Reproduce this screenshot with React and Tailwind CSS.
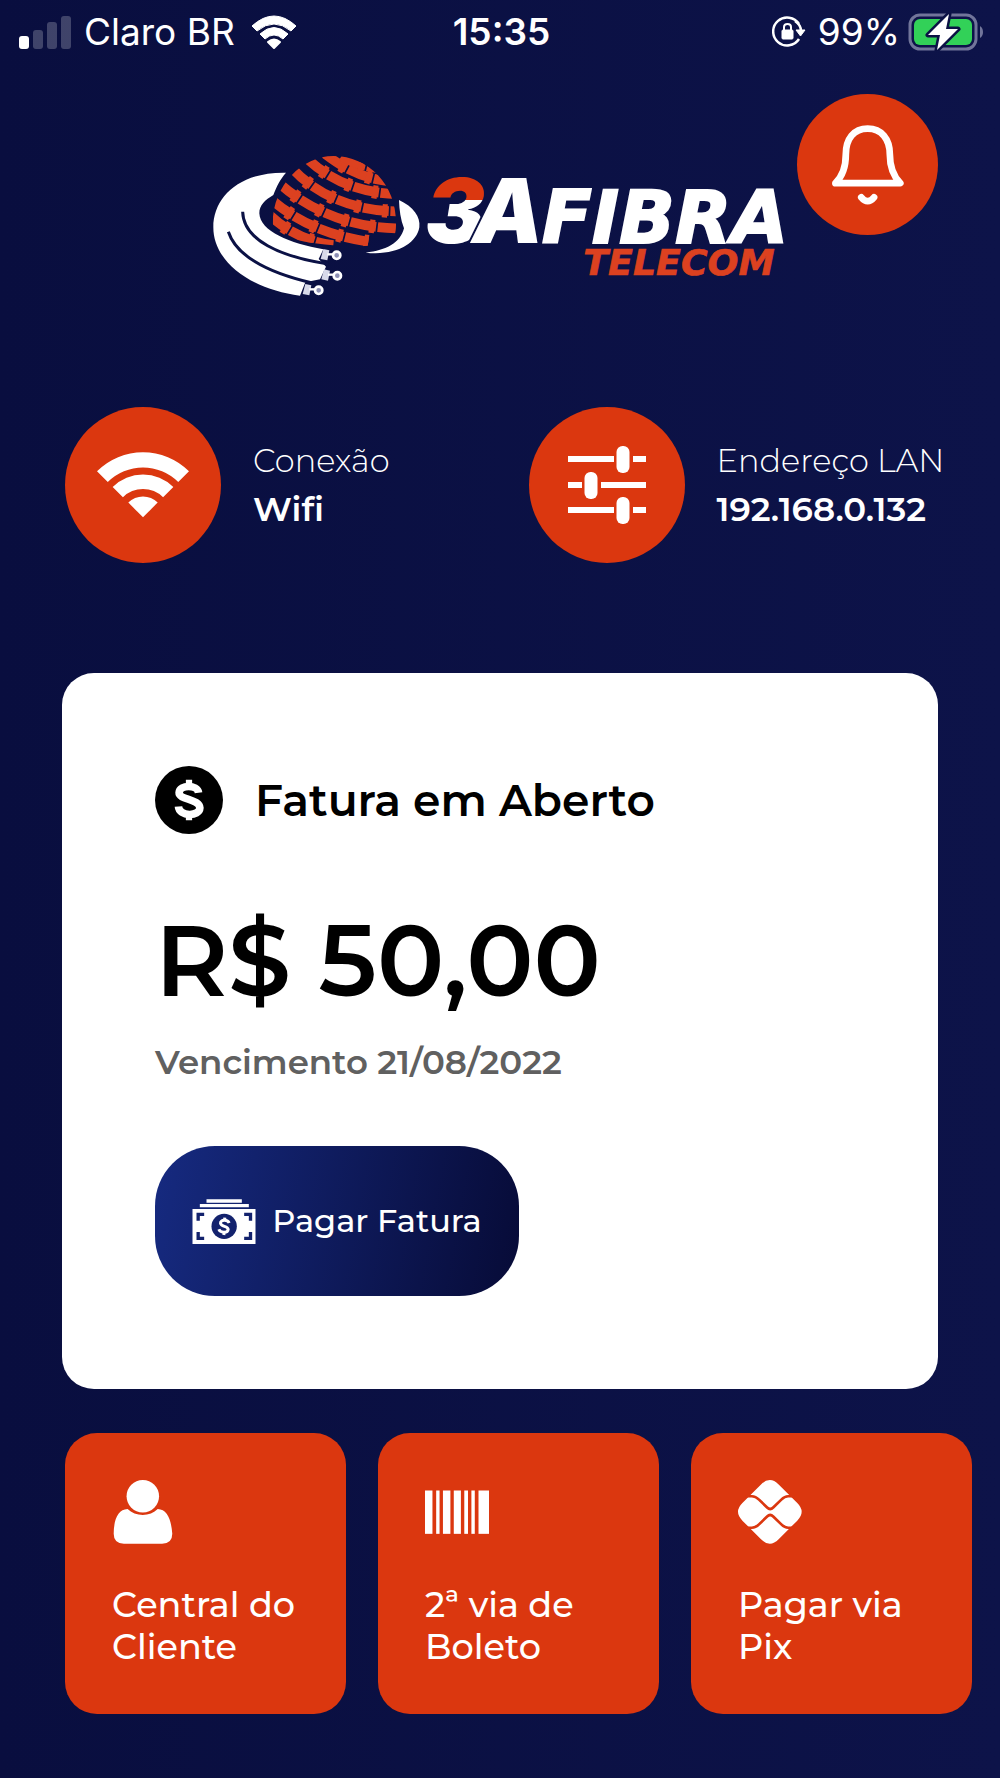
import { useState } from "react";

const cables = [
  { x: 362, y: 343 },
  { x: 364, y: 404 },
  { x: 308, y: 448 },
];

const globeBands = [
  "M205 222 C260 275 330 308 400 315",
  "M215 180 C280 235 370 285 505 305",
  "M235 128 C310 195 430 265 600 265",
  "M275 84 C345 160 455 215 600 214",
  "M320 55 C385 115 470 160 600 163",
  "M375 42 C425 80 480 115 570 124",
  "M425 48 C450 65 490 80 540 86",
];

const barcode = [
  [0, 22],
  [33, 10],
  [53, 22],
  [85, 21],
  [116, 11],
  [137, 10],
  [158, 31],
];

const Logo = () => (
  <svg viewBox="39 48 1722 426" className="w-full overflow-visible" role="img" aria-label="3A Fibra Telecom">
    <defs>
      <clipPath id="globe">
        <path d="M220 275 C205 150 300 48 400 48 C510 48 592 140 588 255 C588 280 582 292 575 298 C530 318 480 322 440 318 C350 315 270 300 220 275Z" />
      </clipPath>
      <linearGradient id="three" gradientUnits="userSpaceOnUse" x1="0" y1="105" x2="0" y2="310">
        <stop offset="0.36" stopColor="#db370f" />
        <stop offset="0.36" stopColor="#ffffff" />
      </linearGradient>
    </defs>

    {/* fiber cables around the globe */}
    <path
      fill="#fff"
      d="M258 98 C120 95 40 170 40 262 C40 370 160 450 300 467 L316 427 L360 418 L378 380 L356 357 L370 328 C270 310 180 275 178 220 C178 195 195 180 220 165 C230 140 240 118 258 98Z"
    />
    <g fill="none" stroke="#0b1145" strokeWidth="9">
      <path d="M128 215 C130 300 240 350 385 372" />
      <path d="M85 275 C110 350 210 400 340 430" />
    </g>
    {cables.map((item) => (
      <g key={item.x}>
        <path d={`M${item.x + 8} ${item.y - 16} l18 4 l-6 30 l-20 -4z`} fill="#d8daea" />
        <path d={`M${item.x + 20} ${item.y} h16`} stroke="#fff" strokeWidth="7" />
        <circle cx={item.x + 48} cy={item.y + 3} r="11" fill="#8d90b5" stroke="#fff" strokeWidth="8" />
      </g>
    ))}
    <path fill="#fff" d="M597 180 C640 200 662 230 658 262 C650 310 590 348 497 338 C560 330 600 310 612 265 C602 240 598 210 597 180Z" />

    <g clipPath="url(#globe)" fill="none" stroke="#dc4120">
      {globeBands.map((d) => (
        <g key={d}>
          <path d={d} strokeWidth="29" strokeDasharray="78 5" />
          <path d={d} strokeWidth="40" strokeDasharray="16 67" strokeDashoffset="-58" />
        </g>
      ))}
    </g>

    <g fontStyle="italic" fontWeight="900">
      <text x="676" y="308" fontSize="270" fill="url(#three)" fontFamily="Inter, sans-serif">3</text>
      <text x="816" y="308" fontSize="270" fill="#fff" stroke="#0b1145" strokeWidth="12" paintOrder="stroke" fontFamily="Inter, sans-serif">A</text>
      <text x="1025" y="308" fontSize="220" fill="#fff" stroke="#fff" strokeWidth="6" fontFamily="DejaVu Sans, sans-serif">FIBRA</text>
      <text x="1150" y="406" fontSize="109" fill="#dc4120" stroke="#dc4120" strokeWidth="2" fontFamily="DejaVu Sans, sans-serif">TELECOM</text>
    </g>
  </svg>
);

const BellIcon = () => (
  <svg viewBox="157 134 214 238" className="h-20 w-[72px]" fill="none" stroke="#fff" strokeWidth="20" strokeLinecap="round" strokeLinejoin="round">
    <path d="M167 307 C190 285 198 255 198 222 C198 175 222 145 263 145 C304 145 329 175 329 222 C329 255 338 285 360 307Z" />
    <path d="M244 349 Q263 372 282 349" />
  </svg>
);

const WifiIcon = () => (
  <svg viewBox="0 0 94 66" className="h-[66px] w-[92px]" fill="#fff">
    <path d="M0 19 A66.5 66.5 0 0 1 94 19 L83 30 A51 51 0 0 0 11 30Z" />
    <path d="M16 35 A44 44 0 0 1 78 35 L67.500 45.500 A29 29 0 0 0 26.500 45.500Z" />
    <path d="M32 51 A21 21 0 0 1 62 51 L47 66Z" />
  </svg>
);

const SlidersIcon = () => (
  <svg viewBox="0 0 78 78" className="size-[78px]" fill="#fff">
    <path d="M0 10 h46 v6 h-46z M65 10 h13 v6 h-13z M0 36 h14 v6 h-14z M33 36 h45 v6 h-45z M0 61 h46 v6 h-46z M65 61 h13 v6 h-13z" />
    <rect x="48.500" y="0" width="13" height="27" rx="6" />
    <rect x="16.500" y="26" width="13" height="27" rx="6" />
    <rect x="48.500" y="51" width="13" height="27" rx="6" />
  </svg>
);

const CoinIcon = () => (
  <svg viewBox="65 80 206 206" className="size-[68px]" fill="none">
    <circle cx="168" cy="183" r="103" fill="#000" />
    <path d="M197 161 C194 136 139 136 138 161 C137 182 200 180 201 207 C200 234 138 234 136 203" stroke="#fff" strokeWidth="23" />
    <path d="M168 122 V142 M168 224 V244" stroke="#fff" strokeWidth="19" />
  </svg>
);

const MoneyIcon = () => (
  <svg viewBox="189 204 189 135" className="h-[45px] w-16" fill="none">
    <path d="M231 205 h106 v10 h-106z M211 219 h147 v10 h-147z M189 234 h189 v105 h-189z" fill="#fff" />
    <circle cx="284" cy="286" r="38" fill="#13226d" />
    <path d="M224 250 H206 V269 M344 250 H363 V269 M224 322 H206 V303 M344 322 H363 V303" stroke="#13226d" strokeWidth="10" />
    <path d="M299 276 C294 264 272 266 273 277 C275 289 295 283 296 295 C295 307 272 306 268 295" stroke="#fff" strokeWidth="9" />
    <path d="M286 260 L285 270 M284 301 L283 312" stroke="#fff" strokeWidth="9" />
  </svg>
);

const UserIcon = () => (
  <svg viewBox="187 181 189 189" className="size-16" fill="#fff">
    <circle cx="278" cy="229" r="48" />
    <path d="M233 267 C205 268 192 298 192 340 Q192 369 222 369 H335 Q365 369 365 340 C362 298 350 268 322 267 C300 290 256 290 233 267Z" />
  </svg>
);

const BarcodeIcon = () => (
  <svg viewBox="0 0 189 189" className="size-16" fill="#fff">
    {barcode.map(([x, width]) => (
      <rect key={x} x={x} y="31" width={width} height="128" />
    ))}
  </svg>
);

const PixIcon = () => (
  <svg viewBox="173 181 189 189" className="size-16" fill="none">
    <path d="M241 194 Q267 168 293 194 L348 249 Q374 275 348 301 L293 356 Q267 382 241 356 L186 301 Q160 275 186 249Z" fill="#fff" />
    <g stroke="#db370f" strokeWidth="8">
      <path d="M196 229 H214 Q225 229 235 239 L259 262 Q268 271 277 262 L301 239 Q311 229 321 229 H340" />
      <path d="M196 322 H214 Q225 322 235 312 L259 289 Q268 280 277 289 L301 312 Q311 322 321 322 H340" />
    </g>
  </svg>
);

const StatusBar = () => (
  <div className="grid h-16 grid-cols-3 items-center pl-[19px] pr-4 font-[Inter,sans-serif] text-[37px] text-white">
    <div className="flex items-center gap-3">
      <svg viewBox="0 0 53 33" className="h-[33px] w-[53px]" fill="#fff">
        <rect x="0" y="20" width="10" height="13" rx="3" />
        <g opacity="0.22">
          <rect x="14" y="14" width="10" height="19" rx="3" />
          <rect x="28" y="6" width="10" height="27" rx="3" />
          <rect x="42" y="0" width="10" height="33" rx="3" />
        </g>
      </svg>
      <span>Claro BR</span>
      <svg viewBox="0 0 46 35" className="ml-1 h-[35px] w-[46px]" fill="#fff" stroke="#fff" strokeLinejoin="round">
        <path d="M1 11 Q23 -9 45 11 L40 16 Q23 2 6 16Z" strokeWidth="1" />
        <path d="M9 19 Q23 6 37 19 L32 24 Q23 16 14 24Z" strokeWidth="1" />
        <path d="M17 27 Q23 22 29 27 L23 33Z" strokeWidth="2" />
      </svg>
    </div>
    <div className="text-center font-semibold">15:35</div>
    <div className="flex items-center justify-end gap-2">
      <svg viewBox="0 0 34 32" className="mr-1 h-8 w-[34px]" fill="none" stroke="#fff">
        <path d="M27 8 A14 14 0 1 0 27 23" strokeWidth="2.500" />
        <path d="M23 5 Q29 9 29 15" strokeWidth="2.500" />
        <path d="M24 14 H33 L28.500 20Z" fill="#fff" />
        <rect x="10" y="14" width="11" height="9" rx="1" fill="#fff" />
        <path d="M12 14 V11 Q12 8 15.500 8 Q19 8 19 11 V14" strokeWidth="2" />
      </svg>
      <span>99%</span>
      <svg viewBox="0 0 76 38" className="h-[38px] w-[76px]" fill="none">
        <rect x="2" y="2" width="66" height="34" rx="10" stroke="#71759a" strokeWidth="3" />
        <rect x="6" y="6" width="58" height="26" rx="6" fill="#32d158" />
        <path d="M72 13 Q75 15 75 19 Q75 23 72 25Z" fill="#71759a" />
        <path d="M41 1 L20 22 H32 L29 37 L50 16 H38Z" fill="#fff" stroke="#0b1145" strokeWidth="5" strokeLinejoin="round" paintOrder="stroke" />
      </svg>
    </div>
  </div>
);

const InfoItem = ({ title, value, children }) => (
  <div className="flex items-center gap-8">
    <div className="flex size-[156px] shrink-0 items-center justify-center rounded-full bg-[#db370f]">
      {children}
    </div>
    <div className="whitespace-nowrap text-white">
      <div className="text-[32px] leading-12 font-light">{title}</div>
      <div className="text-[34px] leading-12 font-semibold">{value}</div>
    </div>
  </div>
);

const shortcuts = [
  { name: "Central do Cliente", icon: <UserIcon /> },
  { name: "2ª via de Boleto", icon: <BarcodeIcon /> },
  { name: "Pagar via Pix", icon: <PixIcon /> },
];

export default function App() {
  const [hasNotification, setHasNotification] = useState(true);

  return (
    <div className="min-h-screen bg-linear-to-r from-[#090e3f] to-[#0d1349] pb-14 font-[Montserrat,Inter,sans-serif]">
      <StatusBar />

      <header className="grid grid-cols-[1fr_minmax(0,574px)_1fr] items-start px-[62px] pt-[30px]">
        <div></div>
        <div className="pt-[62px]">
          <Logo />
        </div>
        <button
          aria-label="Notificações"
          aria-pressed={hasNotification}
          onClick={() => setHasNotification(!hasNotification)}
          className="flex size-[141px] items-center justify-center justify-self-end rounded-full bg-[#db370f]"
        >
          <BellIcon />
        </button>
      </header>

      <section className="grid grid-cols-2 pt-[109px] pl-[65px] pr-2">
        <InfoItem title="Conexão" value="Wifi">
          <WifiIcon />
        </InfoItem>
        <InfoItem title="Endereço LAN" value="192.168.0.132">
          <SlidersIcon />
        </InfoItem>
      </section>

      <section className="mx-[62px] mt-[110px] rounded-[32px] bg-white p-[93px]">
        <div className="flex items-center gap-8">
          <CoinIcon />
          <h2 className="text-[44px] leading-16 font-semibold text-black">Fatura em Aberto</h2>
        </div>
        <div className="mt-[62px] text-[100px] leading-32 font-semibold text-black">R$ 50,00</div>
        <div className="mt-[14px] text-[34px] leading-12 font-semibold text-[#606060]">Vencimento 21/08/2022</div>
        <button className="mt-15 flex h-[150px] w-[364px] items-center justify-center gap-4 rounded-[60px] bg-linear-[100deg] from-[#162a80] to-[#070b37] text-[32px] font-medium text-white">
          <MoneyIcon />
          Pagar Fatura
        </button>
      </section>

      <section className="mt-11 grid grid-cols-3 gap-8 pl-[65px] pr-7">
        {shortcuts.map((item) => (
          <button key={item.name} className="flex aspect-square flex-col items-start rounded-[32px] bg-[#db370f] pt-[47px] pr-8 pl-[47px] text-left text-white">
            {item.icon}
            <span className="mt-10 text-[35px] leading-[42px] font-medium">{item.name}</span>
          </button>
        ))}
      </section>
    </div>
  );
}
